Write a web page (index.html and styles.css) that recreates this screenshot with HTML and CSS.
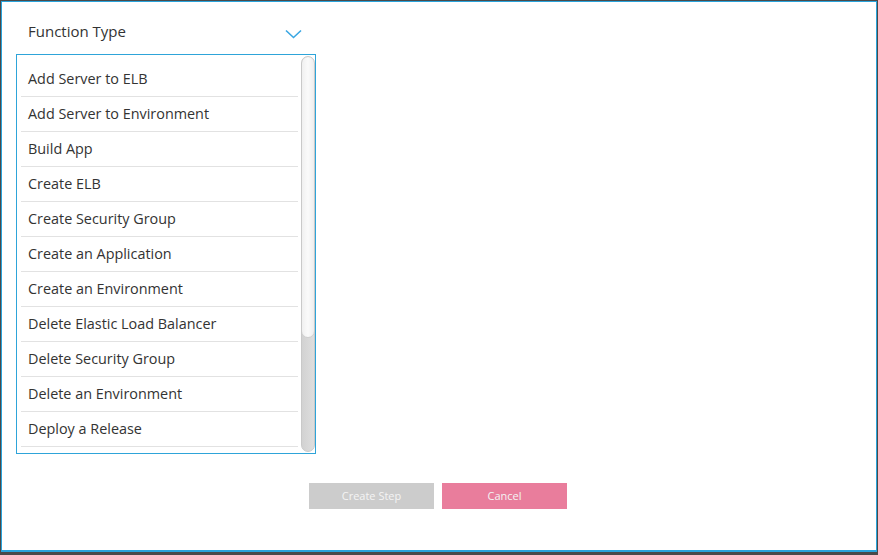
FILE: index.html
```html
<!DOCTYPE html>
<html>
<head>
<meta charset="utf-8">
<link rel="stylesheet" href="styles.css">
</head>
<body>
<div class="modal">
  <div class="field">
    <div class="field-head">
      <span class="field-label">Function Type</span>
      <svg class="chevron" width="17" height="10" viewBox="0 0 17 10"><polyline points="1,1.5 8.5,8.5 16,1.5" fill="none" stroke="#3aa7e3" stroke-width="1.6"/></svg>
    </div>
    <div class="listbox">
      <ul class="options">
        <li>Add Server to ELB</li>
        <li>Add Server to Environment</li>
        <li>Build App</li>
        <li>Create ELB</li>
        <li>Create Security Group</li>
        <li>Create an Application</li>
        <li>Create an Environment</li>
        <li>Delete Elastic Load Balancer</li>
        <li>Delete Security Group</li>
        <li>Delete an Environment</li>
        <li>Deploy a Release</li>
      </ul>
      <div class="scrollbar"><div class="thumb"></div></div>
    </div>
  </div>
  <div class="actions">
    <button class="btn btn-create">Create Step</button>
    <button class="btn btn-cancel">Cancel</button>
  </div>
</div>
</body>
</html>
```

FILE: styles.css
```css
html, body {
  margin: 0;
  padding: 0;
}
body {
  background: #4a4a4a;
  width: 878px;
  height: 555px;
  overflow: hidden;
  font-family: "Open Sans", "Liberation Sans", sans-serif;
}
.modal {
  margin: 1px 0 0 1px;
  width: 874px;
  height: 536px;
  background: #fff;
  border: 1px solid #29a3db;
  border-bottom-width: 2px;
  padding-top: 12px;
  box-sizing: content-box;
}
.field {
  margin-left: 14px;
  width: 300px;
}
.field-head {
  height: 36px;
  display: flex;
  align-items: center;
  justify-content: space-between;
  padding: 0 14px 0 12px;
  margin-bottom: 4px;
}
.field-label {
  font-size: 15px;
  color: #333;
  line-height: 20px;
  margin-bottom: 2px;
}
.chevron {
  display: block;
  margin-top: 4px;
}
.listbox {
  box-sizing: border-box;
  width: 300px;
  height: 400px;
  border: 1px solid #2ea4d9;
  display: flex;
  overflow: hidden;
}
.options {
  list-style: none;
  margin: 0;
  padding: 7px 0 0 4px;
  width: 277px;
  flex: none;
}
.options li {
  height: 34px;
  border-bottom: 1px solid #e2e2e2;
  font-size: 14.4px;
  line-height: 34px;
  color: #333;
  padding-left: 7px;
  white-space: nowrap;
}
.scrollbar {
  margin: 1px 0 0 3px;
  width: 14px;
  height: 396px;
  box-sizing: border-box;
  border: 1px solid #c9c9c9;
  border-radius: 7px;
  background: linear-gradient(to right, #d2d2d2, #dedede);
  flex: none;
  overflow: hidden;
}
.thumb {
  height: 282px;
  margin: -1px -1px 0 -1px;
  box-sizing: border-box;
  border: 1px solid #cfcfcf;
  border-radius: 7px;
  background: linear-gradient(to right, #f0f0f0, #fafafa 50%, #eeeeee);
}
.actions {
  display: flex;
  justify-content: center;
  gap: 8px;
  margin-top: 29px;
  padding-right: 2px;
}
.btn {
  width: 125px;
  height: 26px;
  border: none;
  font-family: "Open Sans", "Liberation Sans", sans-serif;
  font-size: 11px;
  color: #f4f4f4;
  padding: 0 0 2px 0;
}
.btn-create {
  background: #cccccc;
}
.btn-cancel {
  background: #e97d9c;
}
```
